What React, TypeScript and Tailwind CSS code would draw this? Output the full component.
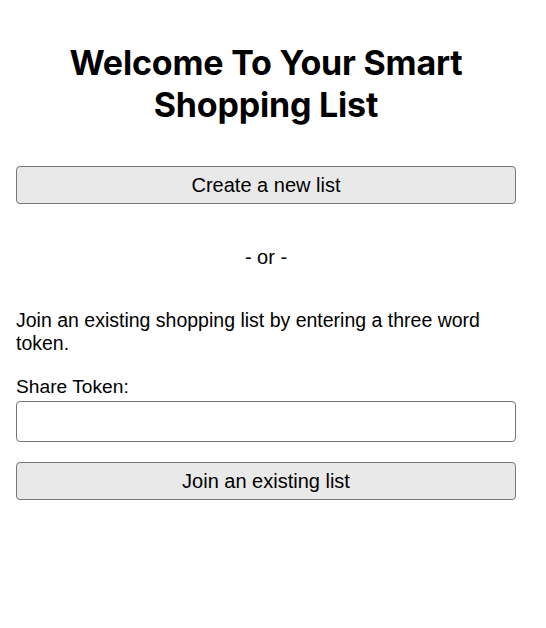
export default function App() {
  return (
    <div className="min-h-screen bg-white px-4 text-black" style={{ fontFamily: '"Liberation Sans", Arial, sans-serif' }}>
      <div className="max-w-[500px]">
        <h1 className="pt-[42px] text-center text-[34px] font-bold leading-[42px] tracking-[-0.2px]" style={{ fontFamily: 'Inter, sans-serif' }}>
          Welcome To Your Smart Shopping List
        </h1>
        <button className="mt-[40px] h-[38px] w-full rounded border border-[#767676] bg-[#e9e9e9] text-[20px] leading-none">
          Create a new list
        </button>
        <p className="mt-[42px] text-center text-[20px] leading-[23px]">- or -</p>
        <p className="mt-[40px] text-[19.5px] leading-[23px]">
          Join an existing shopping list by entering a three word token.
        </p>
        <label className="mt-[20px] block text-[19.2px] leading-[23px]">Share Token:</label>
        <input className="mt-[3px] block h-[41px] w-full rounded border border-[#767676] px-2 text-[20px]" />
        <button className="mt-[20px] h-[38px] w-full rounded border border-[#767676] bg-[#e9e9e9] text-[20px] leading-none">
          Join an existing list
        </button>
      </div>
    </div>
  );
}
